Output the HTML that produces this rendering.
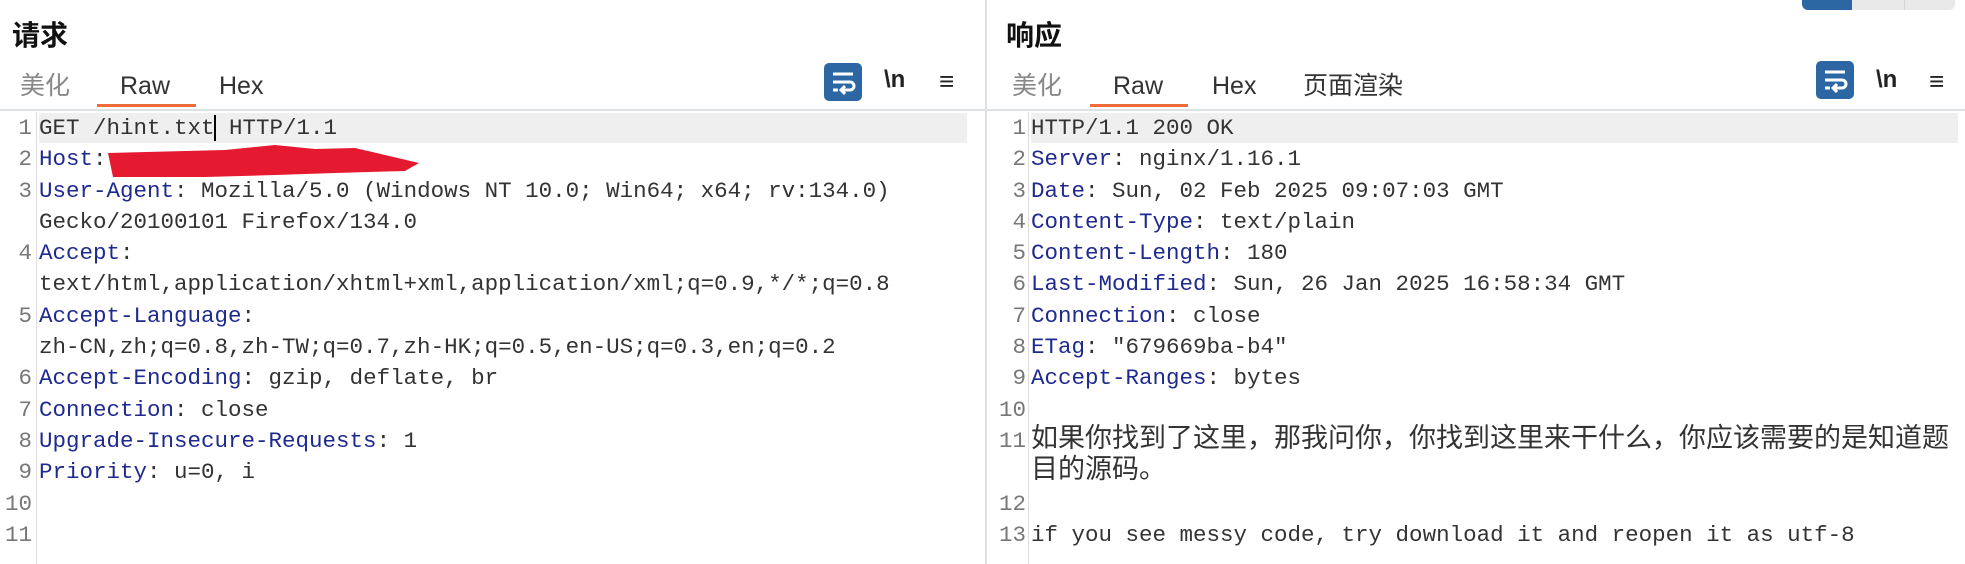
<!DOCTYPE html>
<html><head><meta charset="utf-8"><style>
body{margin:0;width:1965px;height:564px;background:#fff;position:relative;overflow:hidden;font-family:"Liberation Sans","Noto Sans CJK SC",sans-serif;color:#222}
.a{position:absolute;white-space:pre}
.title{font-size:28px;font-weight:bold;top:14px;color:#111}
.tab{font-size:25px;top:72px;color:#333}
.tab.c{top:66px}
.tab.g{color:#888}
.ul{position:absolute;height:3px;background:#f06b3a;top:104px}
.sep{position:absolute;height:2px;background:#dde1e3;top:109px}
.hl{position:absolute;height:30px;background:#efefef;top:113px}
.gut{position:absolute;width:1px;background:#ddd;top:112px;height:452px}
.code{position:absolute;top:113px;font-family:"Liberation Mono","Noto Sans CJK SC",monospace;font-size:22.5px;line-height:31.3px;white-space:pre;color:#333}
.num{position:absolute;top:113px;font-family:"Liberation Mono",monospace;font-size:22.5px;line-height:31.3px;white-space:pre;color:#777;text-align:right}
.k{color:#1f2a8f}
.cj{font-size:27px;display:inline-block;height:31.3px;line-height:31.3px;vertical-align:top;overflow:visible}
.wrap{position:absolute;width:38px;height:38px;background:#2c67a3;border-radius:5px}
.nl{font-family:"Liberation Sans",sans-serif;font-size:24px;font-weight:bold;color:#222;top:66px}
</style></head><body>
<div style="position:absolute;left:1802px;top:-6px;width:50px;height:16px;background:#2c67a3;border-radius:0 0 0 6px"></div>
<div style="position:absolute;left:1852px;top:-6px;width:52px;height:16px;background:#e9e9e9;border-right:1px solid #d5d5d5"></div>
<div style="position:absolute;left:1905px;top:-6px;width:50px;height:16px;background:#e9e9e9;border-radius:0 0 6px 0"></div>

<div style="position:absolute;left:985px;top:0;width:2px;height:564px;background:#e0e0e0"></div>

<div class="a title" style="left:12px">请求</div>
<div class="a tab g c" style="left:20px">美化</div>
<div class="a tab" style="left:120px">Raw</div>
<div class="a tab" style="left:219px">Hex</div>
<div class="ul" style="left:97px;width:99px"></div>
<div class="wrap" style="left:824px;top:63px"><svg width="38" height="38" viewBox="0 0 38 38"><path d="M9 11h20M9 19h17a4 4 0 0 1 0 8h-8M21 23l-4 4 4 4M9 27h5" stroke="#fff" stroke-width="3" fill="none"/></svg></div>
<div class="a nl" style="left:884px">\n</div>
<div class="a" style="left:939px;top:66px;font-size:26px;font-weight:bold">≡</div>
<div class="sep" style="left:0;width:985px"></div>
<div class="hl" style="left:39px;width:928px"></div>
<div class="gut" style="left:36px"></div>
<div class="num" style="left:0;width:32px">1
2
3

4

5

6
7
8
9
10
11</div>
<div class="code" style="left:39px">GET /hint.txt<span style="border-left:2px solid #000;margin-left:-1px"></span> HTTP/1.1
<span class="k">Host</span>:
<span class="k">User-Agent</span>: Mozilla/5.0 (Windows NT 10.0; Win64; x64; rv:134.0)
Gecko/20100101 Firefox/134.0
<span class="k">Accept</span>:
text/html,application/xhtml+xml,application/xml;q=0.9,*/*;q=0.8
<span class="k">Accept-Language</span>:
zh-CN,zh;q=0.8,zh-TW;q=0.7,zh-HK;q=0.5,en-US;q=0.3,en;q=0.2
<span class="k">Accept-Encoding</span>: gzip, deflate, br
<span class="k">Connection</span>: close
<span class="k">Upgrade-Insecure-Requests</span>: 1
<span class="k">Priority</span>: u=0, i</div>
<svg style="position:absolute;left:105px;top:143px" width="320" height="36" viewBox="0 0 320 36"><path d="M3 10 L120 7 L170 2 L210 6 L250 5 L280 12 L314 20 L300 28 L230 30 L170 32 L100 34 L8 34 Z" fill="#e5192f"/></svg>

<div class="a title" style="left:1006px">响应</div>
<div class="a tab g c" style="left:1012px">美化</div>
<div class="a tab" style="left:1113px">Raw</div>
<div class="a tab" style="left:1212px">Hex</div>
<div class="a tab c" style="left:1303px">页面渲染</div>
<div class="ul" style="left:1090px;width:98px"></div>
<div class="wrap" style="left:1816px;top:61px"><svg width="38" height="38" viewBox="0 0 38 38"><path d="M9 11h20M9 19h17a4 4 0 0 1 0 8h-8M21 23l-4 4 4 4M9 27h5" stroke="#fff" stroke-width="3" fill="none"/></svg></div>
<div class="a nl" style="left:1876px">\n</div>
<div class="a" style="left:1929px;top:66px;font-size:26px;font-weight:bold">≡</div>
<div class="sep" style="left:987px;width:978px"></div>
<div class="hl" style="left:1031px;width:927px"></div>
<div class="gut" style="left:1028px"></div>
<div class="num" style="left:990px;width:36px">1
2
3
4
5
6
7
8
9
10
11

12
13</div>
<div class="code" style="left:1031px">HTTP/1.1 200 OK
<span class="k">Server</span>: nginx/1.16.1
<span class="k">Date</span>: Sun, 02 Feb 2025 09:07:03 GMT
<span class="k">Content-Type</span>: text/plain
<span class="k">Content-Length</span>: 180
<span class="k">Last-Modified</span>: Sun, 26 Jan 2025 16:58:34 GMT
<span class="k">Connection</span>: close
<span class="k">ETag</span>: "679669ba-b4"
<span class="k">Accept-Ranges</span>: bytes

<span class="cj">如果你找到了这里，那我问你，你找到这里来干什么，你应该需要的是知道题</span>
<span class="cj">目的源码。</span>

if you see messy code, try download it and reopen it as utf-8</div>
</body></html>
